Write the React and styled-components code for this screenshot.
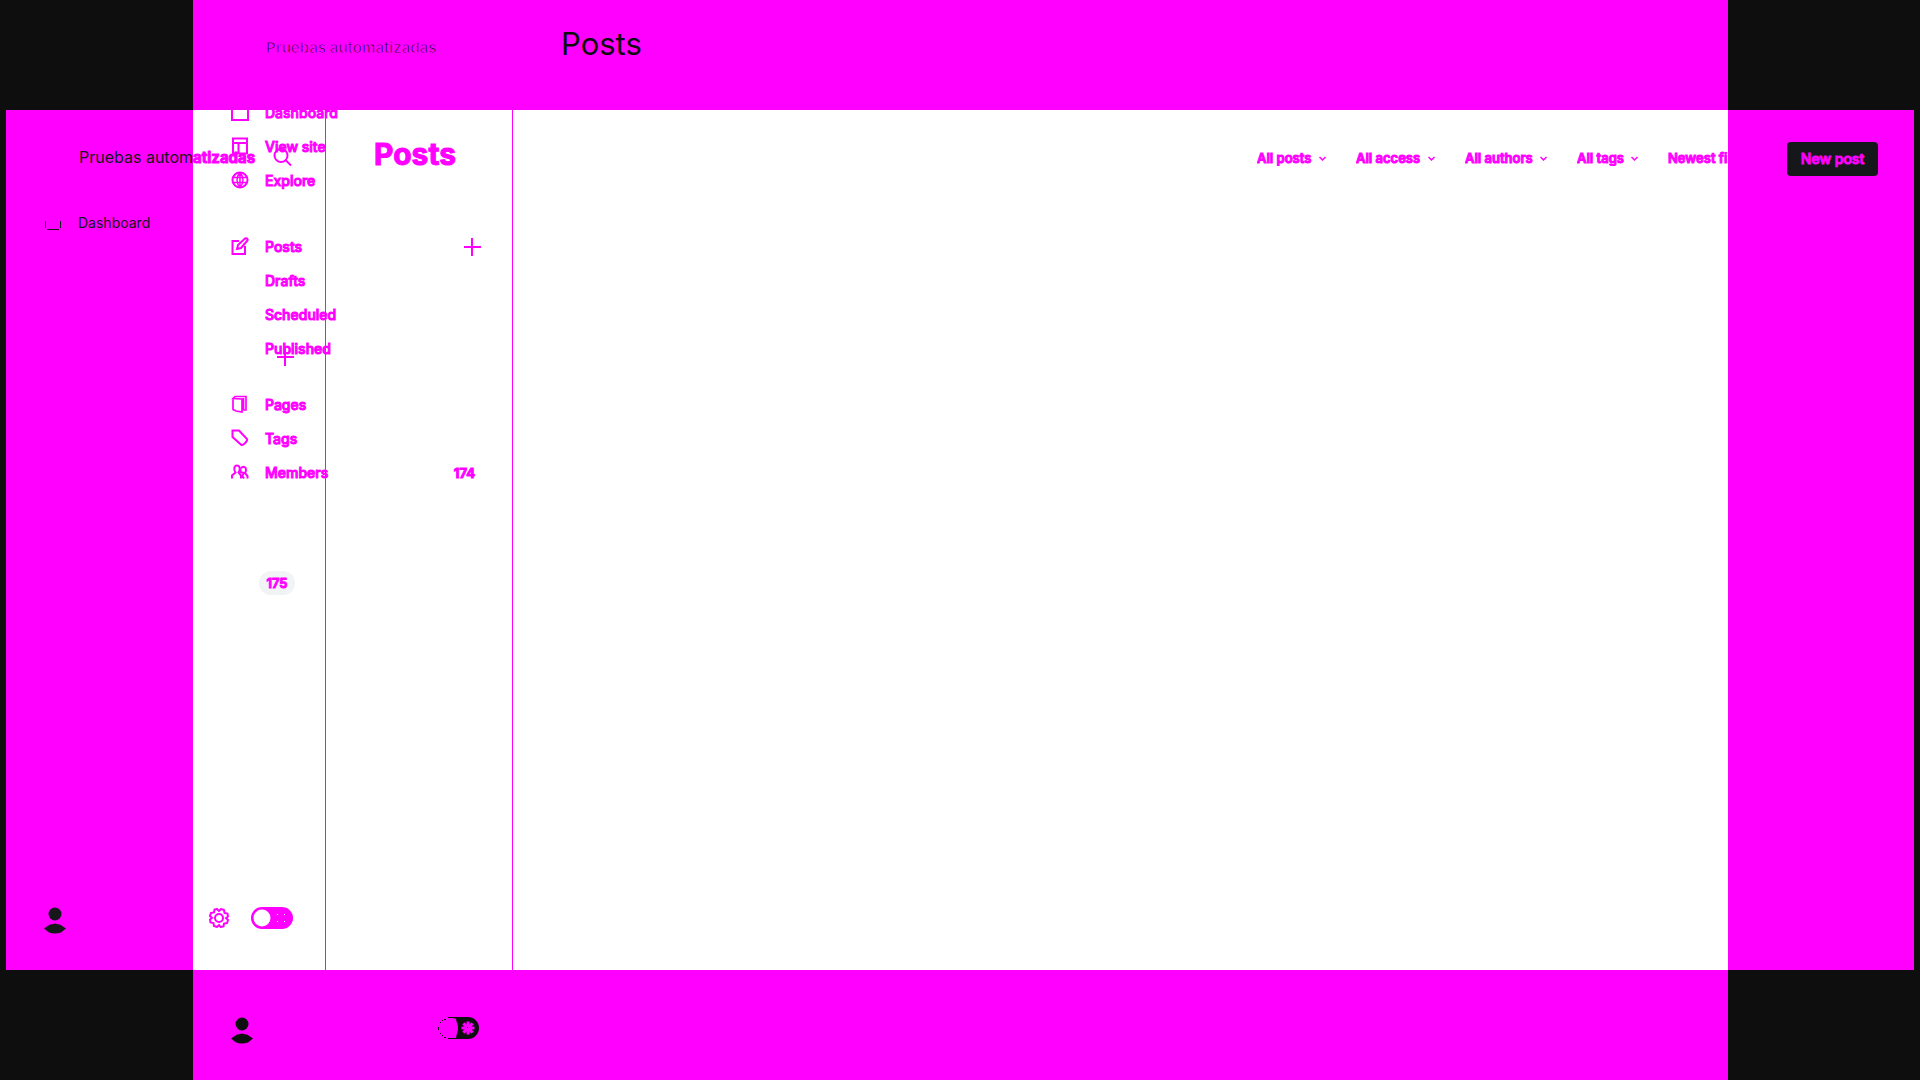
import React from "react";
import styled, { createGlobalStyle } from "styled-components";

const DIFF = "#ff00ff";
const INK = "#15171a";
const SHADE = "#0e0e0e";

const Global = createGlobalStyle`
  *, *::before, *::after { box-sizing: border-box; }
  body { margin: 0; background: ${SHADE}; font-family: Inter, "Liberation Sans", sans-serif; }
  button, select, input { font: inherit; color: inherit; margin: 0; }
`;

/* Two captures share one grid: the tall one fills the middle column,
   the wide one fills the middle row. */
const Stage = styled.div`
  display: grid;
  grid-template-columns: 6px 187px minmax(0, 1fr) 186px 6px;
  grid-template-rows: 110px minmax(0, 1fr) 110px;
  height: 100vh;
  background: ${SHADE};
  overflow: hidden;
`;

const Plane = styled.div`
  grid-column: ${(p) => p.$cols};
  grid-row: ${(p) => p.$rows};
  background: ${(p) => p.$fill};
`;

const Capture = styled.section`
  grid-column: ${(p) => p.$cols};
  grid-row: ${(p) => p.$rows};
  display: flex;
  min-width: 0;
  color: ${DIFF};
`;

const Sidebar = styled.aside`
  display: flex;
  flex-direction: column;
  gap: 31px;
  flex: 0 0 320px;
  padding: 31px 30px 33px 38px;
  border-right: 1px solid ${DIFF};
`;

const Brand = styled.div`
  display: flex;
  align-items: center;
  justify-content: space-between;
  height: 34px;
  padding: 0 2px 2px 35px;
  font-size: 15px;
  font-weight: 700;
  white-space: nowrap;
`;

/* Text whose edges were eaten by the difference colour. */
const Faded = styled.span`
  color: ${SHADE};
  font-weight: 600;
  -webkit-text-stroke: 1px ${DIFF};
`;

const Worn = styled.span`
  color: ${INK};
  font-size: 16px;
  font-weight: 400;
`;

const Solid = styled.span`
  -webkit-text-stroke: 1px ${DIFF};
`;

const Nav = styled.nav`
  display: flex;
  flex-direction: column;
  flex: 1;
`;

const Group = styled.ul`
  list-style: none;
  padding: 0;
  margin: ${(p) => p.$before}px 0 0;
`;

const Item = styled.li`
  display: flex;
  align-items: center;
  justify-content: ${(p) => (p.$end ? "flex-end" : "flex-start")};
  height: 34px;
  padding-right: ${(p) => p.$inset || 0}px;
`;

const NavLink = styled.a`
  display: flex;
  align-items: center;
  gap: 16px;
  flex: 1;
  padding-bottom: 2px;
  color: ${(p) => (p.$worn ? INK : DIFF)};
  text-decoration: none;
  font-size: 14px;
  font-weight: ${(p) => (p.$worn ? 400 : 500)};
  -webkit-text-stroke: ${(p) => (p.$worn ? 0 : 1)}px ${DIFF};
`;

const Slot = styled.span`
  display: flex;
  width: 18px;
  height: 18px;
`;

const Icon = styled.svg`
  display: block;
  fill: none;
  stroke: currentColor;
`;

const IconButton = styled.button`
  display: flex;
  padding: 0;
  border: 0;
  background: none;
  cursor: pointer;
`;

const Count = styled.span`
  font-size: 13px;
  font-weight: 700;
  line-height: 24px;
  -webkit-text-stroke: 1px ${DIFF};
`;

const Badge = styled(Count)`
  width: 36px;
  border-radius: 12px;
  background: #f1f3f4;
  text-align: center;
  font-weight: 600;
`;

const Footer = styled.footer`
  display: flex;
  align-items: center;
  justify-content: space-between;
  height: 34px;
  padding-right: 2px;
`;

const Tools = styled.div`
  display: flex;
  align-items: center;
  gap: 22px;
  height: 30px;
  align-self: flex-start;
`;

const Switch = styled.label`
  display: block;
  position: relative;
  input { position: absolute; inset: 0; width: 100%; height: 100%; opacity: 0; cursor: pointer; }
  svg { display: block; }
`;

const Header = styled.header`
  display: flex;
  flex: 1;
  align-items: flex-start;
  justify-content: space-between;
  min-width: 0;
  height: 66px;
  padding: 32px 36px 0 48px;
`;

const Title = styled.h2`
  margin: 0;
  font-size: ${(p) => (p.$thin ? 31 : 30)}px;
  line-height: 24px;
  font-weight: ${(p) => (p.$thin ? 400 : 700)};
  color: ${(p) => (p.$thin ? SHADE : DIFF)};
  -webkit-text-stroke: ${(p) => (p.$thin ? 0 : 1)}px ${DIFF};
`;

const Filters = styled.div`
  display: flex;
  align-items: center;
  gap: 30px;
  height: 34px;
  padding-bottom: 0;
  font-size: 13px;
  font-weight: 600;
`;

const Filter = styled.label`
  display: flex;
  align-items: center;
  gap: 7px;
`;

const Select = styled.select`
  appearance: none;
  padding: 0 0 2px;
  border: 0;
  background: none;
  cursor: pointer;
  -webkit-text-stroke: 1px ${DIFF};
`;

const NewPost = styled.button`
  height: 34px;
  width: 91px;
  margin-left: 29px;
  padding: 0 0 2px;
  border: 0;
  border-radius: 4px;
  background: ${INK};
  font-size: 14px;
  font-weight: 500;
  white-space: nowrap;
  cursor: pointer;
  -webkit-text-stroke: 1px ${DIFF};
`;

const shapes = {
  home: <path d="M1 7v10h16V7" />,
  site: <path d="M2 1.5h14v15H2zM2 6h14M7.5 6v10.5" />,
  globe: (
    <g strokeWidth="1.5">
      <circle cx="9" cy="9" r="7.500" strokeWidth="2" />
      <path d="M1.500 6.500h15M1.500 11.500h15M9 1.500v15M9 1.500C5 6 5 12 9 16.500M9 1.500c4 4.500 4 10.500 0 15" />
    </g>
  ),
  edit: <path d="M8 4H1.500v13H14V9M6 12l1-4 7-6.500c2-1 3.500 1 2 2.500L10 11z" />,
  pages: <path d="M2 3.500v11l3 1.500 6 1V4L2 3.500 4 1.500h11V15h-3M12.500 3v12" strokeWidth="1.700" />,
  tag: <path d="M1.500 1.500H8l8 8.500c1 2-4 6.500-5.500 6L1.500 8z" />,
  members: <path d="M1 15.500v-3L4.500 9.500C2 6 3.500 2.500 6 2.500S10 6 7.500 9.500l2.500 3v3M10 5.500c2-3 5-1.500 5 1s-.5 2.500-1 3.500l2.500 3v2.500M9.500 6v3l3 1-1 3 1.500 2.500" />,
};

function Glyph({ name }) {
  return <Icon width="18" height="18" viewBox="0 0 18 18" strokeWidth="2" aria-hidden="true">{shapes[name]}</Icon>;
}

function Plus() {
  return (
    <IconButton aria-label="Add">
      <Icon width="18" height="18" viewBox="0 0 18 18" strokeWidth="2"><path d="M0 9h17M8 0v18" /></Icon>
    </IconButton>
  );
}

function Avatar({ color }) {
  return (
    <svg width="30" height="34" viewBox="0 0 30 34" fill={color} aria-hidden="true">
      <circle cx="11" cy="11" r="6.500" />
      <path d="M0 25.500l6-4h1l4-1 4 1h1l6 4-5 4q-6 2-12 0z" />
    </svg>
  );
}

function Toggle({ overlaid }) {
  const rays = [0, 45, 90, 135];
  return (
    <Switch>
      <input type="checkbox" aria-label="Night mode" />
      <svg width="42" height="22" viewBox="0 0 42 22" aria-hidden="true">
        {overlaid ? (
          <>
            <rect width="42" height="22" rx="11" fill={DIFF} />
            <circle cx="11" cy="11" r="8.500" fill="#fff" />
            <path d="M26 7h1v1h-1zM33 7h1v1h-1zM26 14h1v1h-1zM33 14h1v1h-1z" fill="#fff" />
          </>
        ) : (
          <>
            <path d="M10 0h20a11 11 0 0 1 0 22H10v-1h8l2-10-2-9-3-1h-5z" fill={SHADE} />
            <circle cx="10.500" cy="11" r="9.500" fill={DIFF} />
            <path d="M0 10h1v3H0zM2 5h1v1H2zM4 3h1v1H4zM6 2h2v1H6zM2 16h1v1H2zM4 18h1v1H4zM6 20h2v1H6z" fill={SHADE} />
            <g stroke={DIFF} strokeWidth="3">
              {rays.map((r) => <path key={r} d="M30 4.500v13" transform={`rotate(${r} 30 11)`} />)}
            </g>
            <path d="M29 10h1v1h-1z" fill={SHADE} />
          </>
        )}
      </svg>
    </Switch>
  );
}

function Entry({ icon, children, trailing, inset }) {
  return (
    <Item $inset={inset}>
      <NavLink href="#">
        <Slot>{icon && <Glyph name={icon} />}</Slot>
        {children}
      </NavLink>
      {trailing}
    </Item>
  );
}

function TallCapture() {
  return (
    <Capture $cols="3" $rows="1 / -1">
      <Sidebar>
        <Brand><Faded>Pruebas automatizadas</Faded></Brand>
        <Nav>
          <Group $before={0}>
            <Entry icon="home">Dashboard</Entry>
            <Entry icon="site">View site</Entry>
            <Entry icon="globe">Explore</Entry>
          </Group>
          <Group $before={32}>
            <Entry icon="edit" trailing={<Plus />}>Posts</Entry>
            <Entry>Drafts</Entry>
            <Entry>Scheduled</Entry>
            <Entry>Published</Entry>
          </Group>
          <Group $before={22}>
            <Entry icon="pages">Pages</Entry>
            <Entry icon="tag">Tags</Entry>
            <Entry icon="members" inset={7} trailing={<Count>174</Count>}>Members</Entry>
          </Group>
        </Nav>
        <Footer>
          <Avatar color={SHADE} />
          <Tools><Toggle /></Tools>
        </Footer>
      </Sidebar>
      <Header><Title $thin>Posts</Title></Header>
    </Capture>
  );
}

const filters = ["All posts", "All access", "All authors", "All tags"];

function WideCapture() {
  return (
    <Capture $cols="2 / 5" $rows="2">
      <Sidebar>
        <Brand>
          <span><Worn>Pruebas autom</Worn><Solid>atizadas</Solid></span>
          <IconButton aria-label="Search">
            <Icon width="20" height="18" viewBox="0 0 20 18" strokeWidth="2"><circle cx="8" cy="7.500" r="6.500" /><path d="M12.500 12l5.500 5.500" /></Icon>
          </IconButton>
        </Brand>
        <Nav>
          <Group $before={0}>
            <Item>
              <NavLink href="#" $worn>
                <Slot>
                  <Icon width="18" height="18" viewBox="0 0 18 18" strokeWidth="1"><path d="M1.500 8v7M16.500 8v7M3 16.500h12" /></Icon>
                </Slot>
                Dashboard
              </NavLink>
            </Item>
          </Group>
          <Group $before={100}><Item $end><Plus /></Item></Group>
          <Group $before={192}><Item $end><Badge>175</Badge></Item></Group>
        </Nav>
        <Footer>
          <Avatar color={INK} />
          <Tools>
            <IconButton aria-label="Settings">
              <Icon width="20" height="20" viewBox="0 0 20 20" strokeWidth="2">
                <circle cx="10" cy="10" r="4" />
                <path d="M10 3l2-2 3 1 .5 3 3 .500.500 3L17 10l2 2-1 3-3 .500-.500 3-3 .500L10 17l-2 2-3-1-.500-3-3-.500-.500-3L3 10 1 8l1-3 3-.500.500-3L8 1z" />
              </Icon>
            </IconButton>
            <Toggle overlaid />
          </Tools>
        </Footer>
      </Sidebar>
      <Header>
        <Title>Posts</Title>
        <Filters>
          {filters.map((f) => (
            <Filter key={f}>
              <Select aria-label={f}><option>{f}</option></Select>
              <Icon width="7" height="6" viewBox="0 0 7 6" strokeWidth="1.500"><path d="M.5 1l3 3 3-3" /></Icon>
            </Filter>
          ))}
          <Select aria-label="Sort order"><option>Newest fi</option></Select>
          <NewPost>New post</NewPost>
        </Filters>
      </Header>
    </Capture>
  );
}

export default function App() {
  return (
    <>
      <Global />
      <Stage>
        <Plane $cols="3" $rows="1 / -1" $fill={DIFF} />
        <Plane $cols="2 / 5" $rows="2" $fill={DIFF} />
        <Plane $cols="3" $rows="2" $fill="#fff" />
        <TallCapture />
        <WideCapture />
      </Stage>
    </>
  );
}
